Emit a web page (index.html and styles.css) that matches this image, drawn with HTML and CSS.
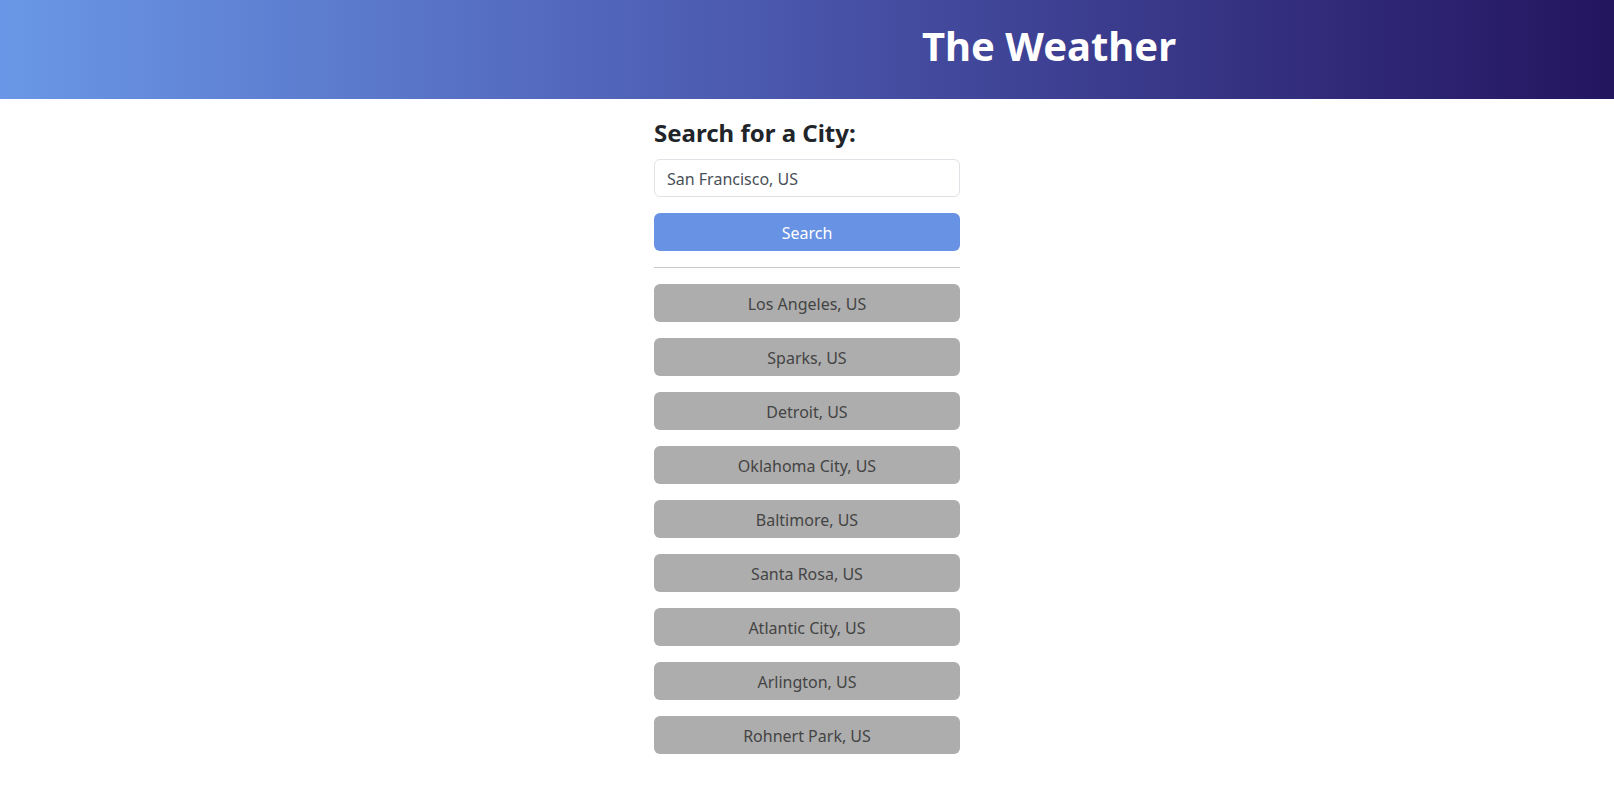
FILE: index.html
```html
<!DOCTYPE html>
<html lang="en">
<head>
<meta charset="utf-8">
<title>The Weather</title>
<link rel="stylesheet" href="styles.css">
</head>
<body>
<header class="site-header">
  <h1 class="site-title">The Weather</h1>
</header>
<main class="search-panel">
  <h2 class="search-heading">Search for a City:</h2>
  <input class="city-input" type="text" value="San Francisco, US">
  <button class="search-btn" type="button">Search</button>
  <hr class="divider">
  <div class="history">
    <button class="history-btn" type="button">Los Angeles, US</button>
    <button class="history-btn" type="button">Sparks, US</button>
    <button class="history-btn" type="button">Detroit, US</button>
    <button class="history-btn" type="button">Oklahoma City, US</button>
    <button class="history-btn" type="button">Baltimore, US</button>
    <button class="history-btn" type="button">Santa Rosa, US</button>
    <button class="history-btn" type="button">Atlantic City, US</button>
    <button class="history-btn" type="button">Arlington, US</button>
    <button class="history-btn" type="button">Rohnert Park, US</button>
  </div>
</main>
</body>
</html>
```
FILE: styles.css
```css
* { box-sizing: border-box; }

html, body {
  margin: 0;
  padding: 0;
  background: #fff;
  font-family: "Noto Sans", "Open Sans", sans-serif;
  color: #212529;
}

.site-header {
  height: 99px;
  background: linear-gradient(90deg, #6a97e7 0%, #4c5bb0 45%, #3a3a8c 70%, #24155f 100%);
  display: flex;
  justify-content: center;
  padding-left: 484px;
  padding-top: 22px;
}

.site-title {
  margin: 0;
  font-size: 40px;
  line-height: 1.2;
  font-weight: 700;
  color: #fff;
}

.search-panel {
  width: 306px;
  margin: 20px auto 0;
  display: flex;
  flex-direction: column;
}

.search-heading {
  margin: 0 0 11px;
  font-size: 24px;
  line-height: 1.2;
  font-weight: 700;
  color: #212529;
}

.city-input {
  height: 38px;
  width: 100%;
  padding: 7px 12px 5px;
  border: 1px solid #dee2e6;
  border-radius: 6px;
  font-family: inherit;
  font-size: 16px;
  color: #495057;
  background: #fff;
  outline: none;
}

.search-btn {
  margin-top: 16px;
  height: 38px;
  width: 100%;
  border: 0;
  border-radius: 6px;
  background: #6892e3;
  color: #fff;
  font-family: inherit;
  font-size: 16px;
  padding: 3px 0 0;
}

.divider {
  margin: 16px 0;
  border: 0;
  border-top: 1px solid #c8c8c8;
  height: 0;
}

.history {
  display: flex;
  flex-direction: column;
  gap: 16px;
}

.history-btn {
  height: 38px;
  width: 100%;
  border: 0;
  border-radius: 6px;
  background: #adadad;
  color: #444;
  font-family: inherit;
  font-size: 16px;
  padding: 3px 0 0;
}
```
